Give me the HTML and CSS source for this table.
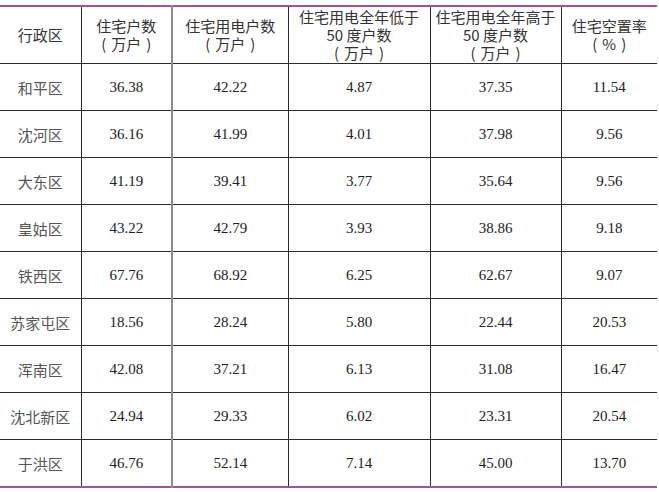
FILE: index.html
```html
<!DOCTYPE html>
<html lang="zh">
<head>
<meta charset="utf-8">
<link rel="stylesheet" href="styles.css">
</head>
<body>
<table class="data">
  <colgroup>
    <col class="c1"><col class="c2"><col class="c3"><col class="c4"><col class="c5"><col class="c6">
  </colgroup>
  <thead>
    <tr>
      <th>行政区</th>
      <th>住宅户数<br><span class="p">(</span>万户<span class="p">)</span></th>
      <th class="g">住宅用电户数<br><span class="p">(</span>万户<span class="p">)</span></th>
      <th>住宅用电全年低于<br>50 度户数<br><span class="p">(</span>万户<span class="p">)</span></th>
      <th>住宅用电全年高于<br>50 度户数<br><span class="p">(</span>万户<span class="p">)</span></th>
      <th>住宅空置率<br><span class="p">(</span>%<span class="p">)</span></th>
    </tr>
  </thead>
  <tbody>
    <tr><td class="name">和平区</td><td>36.38</td><td class="g">42.22</td><td>4.87</td><td>37.35</td><td>11.54</td></tr>
    <tr><td class="name">沈河区</td><td>36.16</td><td class="g">41.99</td><td>4.01</td><td>37.98</td><td>9.56</td></tr>
    <tr><td class="name">大东区</td><td>41.19</td><td class="g">39.41</td><td>3.77</td><td>35.64</td><td>9.56</td></tr>
    <tr><td class="name">皇姑区</td><td>43.22</td><td class="g">42.79</td><td>3.93</td><td>38.86</td><td>9.18</td></tr>
    <tr><td class="name">铁西区</td><td>67.76</td><td class="g">68.92</td><td>6.25</td><td>62.67</td><td>9.07</td></tr>
    <tr><td class="name">苏家屯区</td><td>18.56</td><td class="g">28.24</td><td>5.80</td><td>22.44</td><td>20.53</td></tr>
    <tr><td class="name">浑南区</td><td>42.08</td><td class="g">37.21</td><td>6.13</td><td>31.08</td><td>16.47</td></tr>
    <tr><td class="name">沈北新区</td><td>24.94</td><td class="g">29.33</td><td>6.02</td><td>23.31</td><td>20.54</td></tr>
    <tr><td class="name">于洪区</td><td>46.76</td><td class="g">52.14</td><td>7.14</td><td>45.00</td><td>13.70</td></tr>
  </tbody>
</table>
</body>
</html>
```
FILE: styles.css
```css
html, body {
  margin: 0;
  padding: 0;
  background: #ffffff;
}
body {
  padding-top: 5px;
}
.data {
  border-collapse: collapse;
  table-layout: fixed;
  width: 657px;
  border-top: 2px solid #a4519f;
  border-bottom: 2px solid #a4519f;
}
.c1 { width: 81px; }
.c2 { width: 91px; }
.c3 { width: 116px; }
.c4 { width: 142px; }
.c5 { width: 131px; }
.c6 { width: 96px; }
.data th {
  height: 56px;
  padding: 0;
  font-family: "Noto Sans CJK SC", "Noto Sans", sans-serif;
  font-weight: normal;
  font-size: 15px;
  line-height: 18px;
  color: #333333;
  text-align: center;
  vertical-align: middle;
  border-left: 1px solid #2b2b2b;
  border-bottom: 1px solid #2b2b2b;
}
.data th .p {
  display: inline-block;
  margin: 0 5px;
}
.data td {
  height: 46px;
  padding: 0;
  font-family: "Liberation Serif", "Times New Roman", serif;
  font-size: 15px;
  color: #222222;
  text-align: center;
  vertical-align: middle;
  border-left: 1px solid #2b2b2b;
  border-bottom: 1px solid #2b2b2b;
}
.data tr > :first-child {
  border-left: none;
}
.data .g {
  border-left: 2px solid #8c8c8c;
}
.data td.name {
  font-family: "Noto Sans CJK SC", "Noto Sans", sans-serif;
  color: #555555;
}
.data tbody tr:last-child td {
  border-bottom: none;
}
```
